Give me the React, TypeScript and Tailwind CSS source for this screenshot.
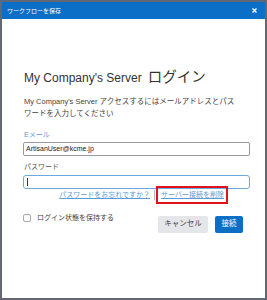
export default function App() {
  return (
    <div
      className="w-[267px] h-[300px] border-2 border-[#626773] bg-white flex flex-col overflow-hidden"
      style={{ fontFamily: '"Liberation Sans", "Noto Sans CJK JP", sans-serif' }}
    >
      <div className="h-[17px] bg-[#0c6fc7] flex items-center justify-between pl-[5px] pr-[8px] shrink-0">
        <span className="text-[6px] text-white leading-none">ワークフローを保存</span>
        <svg className="w-[5px] h-[5px]" viewBox="0 0 10 10">
          <path d="M1 1L9 9M9 1L1 9" stroke="white" strokeWidth="2.6" />
        </svg>
      </div>
      <div className="flex flex-col pl-[21px] pr-[15px] pt-[50px]">
        <h1 className="h-[18px] flex items-center text-[#333] whitespace-nowrap pl-[1px]">
          <span className="text-[12px]">My Company's Server</span>
          <span className="ml-[6px] text-[14.5px]">ログイン</span>
        </h1>
        <p className="mt-[8.5px] text-[7.5px] leading-[12.5px] text-[#444] pl-[1px] whitespace-nowrap">
          My Company's Server アクセスするにはメールアドレスとパス
          <br />
          ワードを入力してください
        </p>
        <label className="mt-[9.5px] text-[7px] leading-[10px] text-[#5b9bd5] pl-[1px]">Eメール</label>
        <div className="mt-[2px] h-[14px] border border-[#9a9a9a] rounded-[2px] flex items-center px-[2px] text-[7px] text-[#222]">
          ArtisanUser@kcme.jp
        </div>
        <label className="mt-[5.5px] text-[7px] leading-[10px] text-[#555] pl-[1px]">パスワード</label>
        <div className="mt-[3px] h-[14px] border border-[#6ea8e0] rounded-[3px] flex items-center px-[3px]">
          <span className="w-px h-[8px] bg-[#333]" />
        </div>
        <div className="-mt-[3px] flex items-center justify-end pr-[22px] text-[7px] text-[#5b9bd5]">
          <span className="underline leading-none">パスワードをお忘れですか？</span>
          <span className="ml-[4px] mr-[1px] w-px h-[10px] bg-[#bbb]" />
          <span className="h-[18px] border-[2px] border-[#e0121c] pl-[3px] pr-[2px] flex items-center leading-none">
            <span className="underline">サーバー接続を削除</span>
          </span>
        </div>
        <div className="mt-[10px] flex items-start justify-between pr-[7px]">
          <div className="flex items-center gap-[6px]">
            <span className="w-[8px] h-[8px] border border-[#aaa] rounded-[2px] bg-white" />
            <span className="text-[7px] leading-[8px] text-[#444]">ログイン状態を保持する</span>
          </div>
          <div className="flex items-center gap-[7px] mt-[2px]">
            <button className="w-[50px] h-[17px] bg-[#e4e6ea] rounded-[2px] text-[7.5px] text-[#444]">
              キャンセル
            </button>
            <button className="w-[28px] h-[17px] bg-[#0c6fc7] rounded-[2px] text-[7.5px] text-white">
              接続
            </button>
          </div>
        </div>
      </div>
    </div>
  );
}
